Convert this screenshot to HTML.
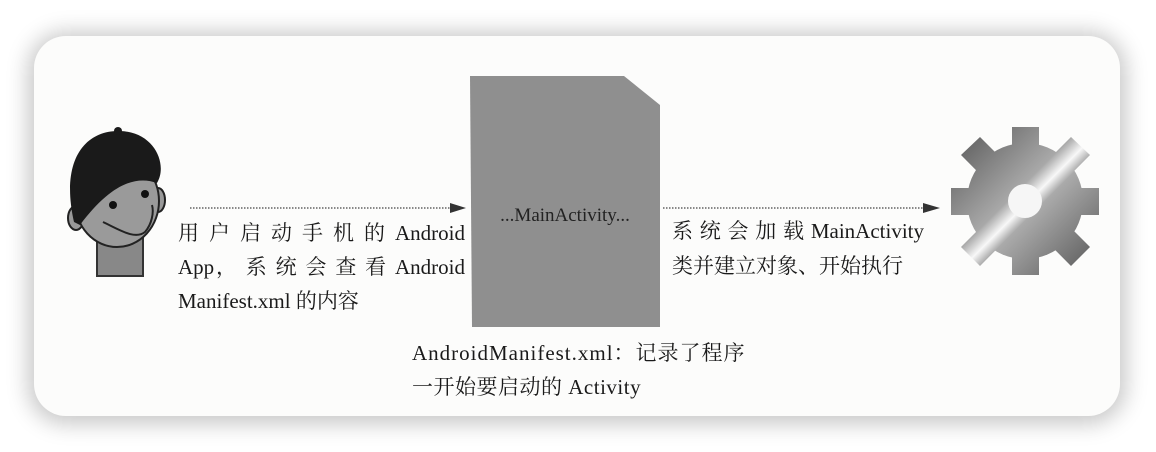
<!DOCTYPE html>
<html><head><meta charset="utf-8"><style>
html,body{margin:0;padding:0;width:1156px;height:452px;background:#fff;overflow:hidden}
.card{position:absolute;left:34px;top:36px;width:1086px;height:380px;border-radius:32px;background:#fcfcfb;box-shadow:0 2px 22px 6px rgba(0,0,0,0.22)}
.t{position:absolute;font-family:"Liberation Serif","Noto Serif CJK SC",serif;font-size:21px;color:#1a1a1a;white-space:nowrap;line-height:34px}
.j{text-align:justify;text-align-last:justify;white-space:normal}
</style></head><body>
<div class="card"></div>
<svg width="1156" height="452" style="position:absolute;left:0;top:0">
<defs>
<linearGradient id="g" gradientUnits="userSpaceOnUse" x1="960" y1="135" x2="1095" y2="270">
<stop offset="0" stop-color="#5e5e5e"/><stop offset="0.42" stop-color="#a8a8a8"/><stop offset="0.5" stop-color="#f8f8f8"/><stop offset="0.56" stop-color="#aaa"/><stop offset="1" stop-color="#5a5a5a"/></linearGradient>
</defs>
<polygon points="470,76 624,76 660,105 660,327 472,327" fill="#8f8f8f"/>
<text x="565" y="221" text-anchor="middle" font-family="Liberation Serif" font-size="19" fill="#222">...MainActivity...</text>
<line x1="190" y1="208" x2="452" y2="208" stroke="#444" stroke-width="1.2" stroke-dasharray="1.5,1.5"/>
<polygon points="450,203 466,208 450,213" fill="#333"/>
<line x1="663" y1="208" x2="925" y2="208" stroke="#444" stroke-width="1.2" stroke-dasharray="1.5,1.5"/>
<polygon points="923,203 940,208 923,213" fill="#333"/>
<g fill="url(#g)">
<circle cx="1025" cy="201" r="58"/>
<rect x="1012" y="127" width="27" height="148"/>
<rect x="951" y="188" width="148" height="27"/>
<polygon points="961,155 980,137 1090,247 1071,266"/>
<polygon points="1071,137 1090,155 980,266 961,247"/>
</g>
<circle cx="1025" cy="201" r="17" fill="#f6f6f6"/>
<g>
<rect x="97" y="232" width="46" height="44" fill="#888" stroke="#333" stroke-width="2"/>
<ellipse cx="76" cy="218" rx="8" ry="12" fill="#999" stroke="#222" stroke-width="2"/>
<ellipse cx="158" cy="200" rx="7" ry="12" fill="#999" stroke="#222" stroke-width="2"/>
<ellipse cx="117" cy="201" rx="42" ry="46" fill="#9a9a9a" stroke="#222" stroke-width="2"/>
<path d="M74,222 C60,160 85,130 120,131 C155,132 168,165 157,183 C135,175 110,185 80,225 Z" fill="#1a1a1a"/>
<circle cx="118" cy="131" r="4" fill="#1a1a1a"/>
<circle cx="113" cy="205" r="4" fill="#111"/><circle cx="145" cy="194" r="4" fill="#111"/>
<path d="M103,222 C120,230 135,240 145,232 C152,224 154,212 152,205" fill="none" stroke="#222" stroke-width="2"/>
</g>
</svg>
<div class="t j" style="left:178px;top:216px;width:287px">用 户 启 动 手 机 的 Android</div>
<div class="t j" style="left:178px;top:250px;width:287px">App， 系 统 会 查 看 Android</div>
<div class="t" style="left:178px;top:284px">Manifest.xml 的内容</div>
<div class="t j" style="left:672px;top:214px;width:252px">系 统 会 加 载 MainActivity</div>
<div class="t" style="left:672px;top:249px">类并建立对象、开始执行</div>
<div class="t" style="left:412px;top:336px;letter-spacing:1px">AndroidManifest.xml：记录了程序</div>
<div class="t" style="left:412px;top:370px;letter-spacing:0.5px">一开始要启动的 Activity</div>
</body></html>
